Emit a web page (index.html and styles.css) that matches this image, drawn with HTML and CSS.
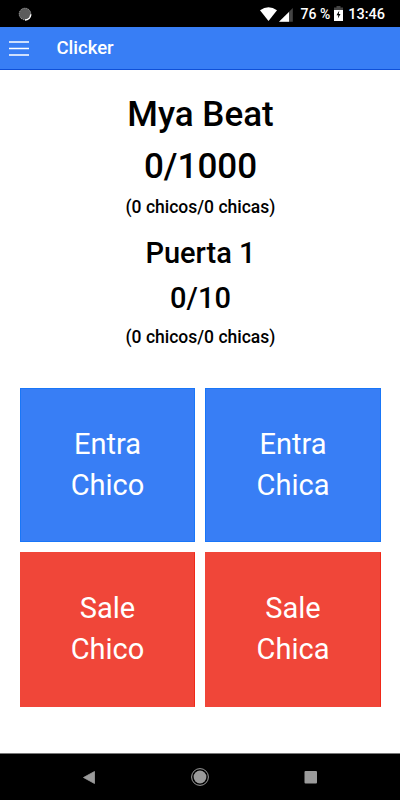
FILE: index.html
```html
<!DOCTYPE html>
<html lang="es">
<head>
<meta charset="utf-8">
<title>Clicker</title>
<link rel="stylesheet" href="styles.css">
</head>
<body>
<div class="status">
  <svg class="spinner" width="14" height="14" viewBox="0 0 14 14"><circle cx="7" cy="7" r="6" fill="#5c5c5c"/><circle cx="7" cy="7" r="5.800" fill="none" stroke="#aaa" stroke-dasharray="1 1"/><path d="M12.800 7.500A6 6 0 0 1 7 13" fill="none" stroke="#fff" stroke-width="1.500"/></svg>
  <svg class="signals" width="34" height="15" viewBox="0 0 34 15"><path d="M0 3.200Q8.500-2.700 17 3.200L8.500 14Z" fill="#fff"/><path d="M32.800 1V14.700H19Z" fill="#444"/><path d="M29 5V14.700H19Z" fill="#fff"/></svg>
  <span class="percent">76 %</span>
  <svg class="battery" width="9" height="15" viewBox="0 0 9 15"><path d="M2.500 0H6.500V1.500H9V5H0V1.500H2.500Z" fill="#444"/><path d="M0 4H9V15H0Z" fill="#fff"/><path d="M5.300 4.500L2.500 9.300H4.300L3.900 12.500L6.500 8H4.800Z" fill="#000"/></svg>
  <span class="clock">13:46</span>
</div>
<header class="toolbar">
  <svg width="20" height="15" viewBox="0 0 20 15"><path d="M0 1H20M0 7.500H20M0 14H20" stroke="#fff" stroke-width="1.700"/></svg>
  <h1>Clicker</h1>
</header>
<main>
  <section class="venue">
    <h2>Mya Beat</h2>
    <h2>0/1000</h2>
    <p>(0 chicos/0 chicas)</p>
  </section>
  <section class="door">
    <h3>Puerta 1</h3>
    <h3>0/10</h3>
    <p>(0 chicos/0 chicas)</p>
  </section>
  <div class="buttons">
    <button class="in">Entra<br>Chico</button>
    <button class="in">Entra<br>Chica</button>
    <button class="out">Sale<br>Chico</button>
    <button class="out">Sale<br>Chica</button>
  </div>
</main>
<nav class="navbar">
  <svg width="18" height="18" viewBox="0 0 18 18"><path d="M14.500 3.500V15.500L3.500 9.500Z" fill="#9b9b9b" stroke="#9b9b9b" stroke-width=".8" stroke-linejoin="round"/></svg>
  <svg width="18" height="18" viewBox="0 0 18 18"><circle cx="9" cy="9" r="6.400" fill="#9b9b9b"/><circle cx="9" cy="9" r="8.400" fill="none" stroke="#9b9b9b"/></svg>
  <svg width="18" height="18" viewBox="0 0 18 18"><rect x="2.500" y="3" width="12.500" height="12.500" rx="1" fill="#9b9b9b"/></svg>
</nav>
</body>
</html>
```
FILE: styles.css
```css
* { box-sizing: border-box; }
body {
  margin: 0;
  width: 400px;
  height: 800px;
  display: flex;
  flex-direction: column;
  background: #fff;
  color: #000;
  font-family: Roboto, sans-serif;
  overflow: hidden;
}
h1, h2, h3, p { margin: 0; font-weight: 500; }
svg { flex: none; display: block; }
.status {
  height: 27px;
  flex: none;
  display: flex;
  align-items: center;
  padding: 1px 15px 0 18px;
  background: #000;
  color: #fff;
  font-size: 14.5px;
  font-weight: 500;
  white-space: nowrap;
}
.signals { margin-left: 228px; }
.percent { width: 29px; margin-left: 6.5px; font-size: 14px; }
.battery { margin: 0 0 1px 4.5px; }
.clock { margin-left: auto; }
.toolbar {
  height: 43px;
  flex: none;
  display: flex;
  align-items: center;
  gap: 28px;
  padding-left: 8.5px;
  background: #387ef5;
  border-bottom: 1px solid #0f50d8;
  color: #fff;
}
.toolbar h1 { font-size: 18.5px; }
main { flex: 1; padding: 19px 19px 0 20px; text-align: center; }
h2 { font-size: 35px; line-height: 52px; }
h3 { font-size: 29px; line-height: 45px; }
p { font-size: 17.5px; line-height: 31px; }
.venue { height: 142px; }
.venue p { line-height: 29px; }
.door { height: 157px; }
.buttons {
  display: grid;
  grid-template-columns: 175px 176px;
  grid-template-rows: 154px 155px;
  gap: 10px;
}
button {
  border: 1px solid;
  padding: 0;
  color: #fff;
  font: 400 29px/41px Roboto, sans-serif;
}
.in { background: #387ef5; border-color: #1976f8; }
.out {
  padding-bottom: 2px;
  background: #f04639;
  border-color: #f04639 #f02818 #f04639 #f04639;
}
.door p { padding-top: 1px; }
.navbar {
  height: 47px;
  flex: none;
  display: flex;
  align-items: center;
  justify-content: space-between;
  padding: 0 80.5px 0 80px;
  border-top: 1px solid #777;
  background: #000;
}
```
